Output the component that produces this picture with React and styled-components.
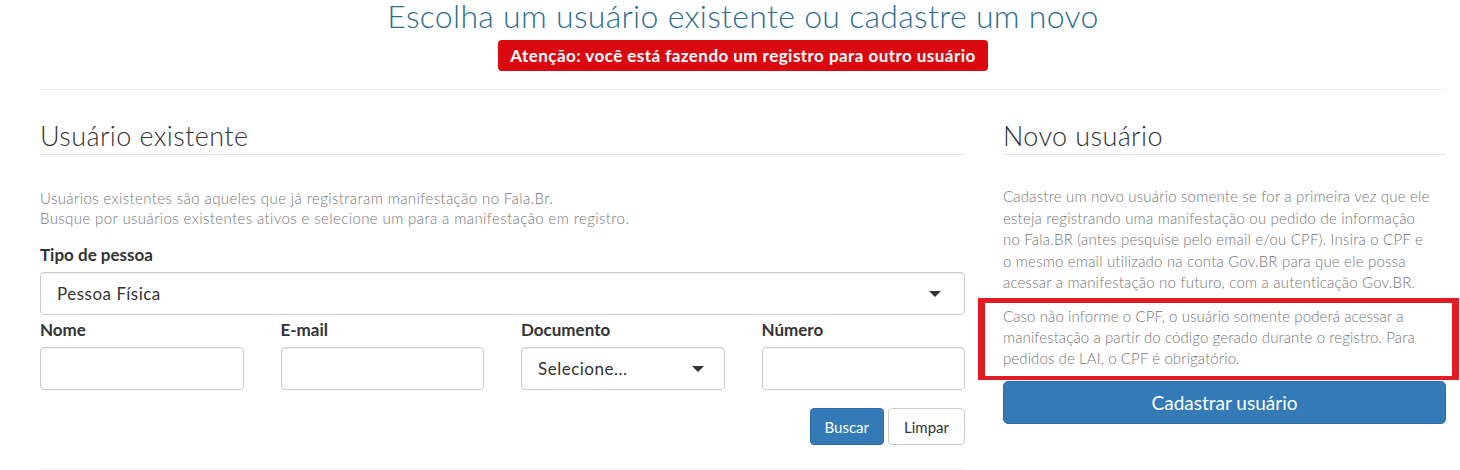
import React from 'react'
import styled, { createGlobalStyle } from 'styled-components'

const Global = createGlobalStyle`
  body {
    margin: 0;
    background: #fff;
    font-family: "Lato", "Open Sans", sans-serif;
    color: #333;
  }
  * { box-sizing: border-box; }
`

const Page = styled.div`
  width: 1460px;
  height: 470px;
  overflow: hidden;
  padding: 0 14px 0 40px;
`

const Header = styled.div`
  display: flex;
  flex-direction: column;
  align-items: center;
  padding-top: 1px;
  padding-bottom: 18px;
  border-bottom: 1px solid #eee;
`

const Title = styled.h1`
  margin: 0;
  font-size: 32px;
  line-height: 30px;
  font-weight: 300;
  color: #2d6f8f;
  letter-spacing: 0.3px;
`

const Warning = styled.div`
  margin-top: 9px;
  background: #d9090f;
  color: #fff;
  font-weight: 700;
  font-size: 17px;
  letter-spacing: 0.45px;
  line-height: 31px;
  padding: 0 12px;
  border-radius: 4px;
`

const Columns = styled.div`
  display: grid;
  grid-template-columns: 925px 443px;
  column-gap: 38px;
  padding-top: 30px;
`

const Column = styled.section`
  display: flex;
  flex-direction: column;
`

const SectionTitle = styled.h2`
  margin: 0;
  font-size: 27px;
  font-weight: 300;
  line-height: 32px;
  letter-spacing: 0.4px;
  color: #333;
  padding-bottom: 2px;
  border-bottom: 1px solid #e5e5e5;
`

const Text = styled.p`
  margin: ${p => p.$top || 0}px 0 0;
  font-size: 15px;
  line-height: ${p => p.$lh || 20}px;
  letter-spacing: ${p => p.$ls || 0}px;
  font-weight: 300;
  color: #777;
`

const Label = styled.label`
  display: block;
  font-weight: 700;
  font-size: 17px;
  line-height: 20px;
  color: #333;
  margin-bottom: 7px;
`

const Field = styled.div`
  display: flex;
  flex-direction: column;
  margin-top: ${p => p.$top || 0}px;
`

const Box = styled.div`
  height: 43px;
  border: 1px solid #ccc;
  border-radius: 4px;
  box-shadow: inset 0 1px 1px rgba(0, 0, 0, 0.075);
  display: flex;
  align-items: center;
  justify-content: space-between;
  padding: 0 16px;
  font-size: 17px;
  font-weight: 400;
  letter-spacing: 0.5px;
  color: #333;
  background: #fff;
`

const Caret = styled.span`
  width: 0;
  height: 0;
  border-left: 6px solid transparent;
  border-right: 6px solid transparent;
  border-top: 6px solid #333;
  margin-right: ${p => p.$mr || 4}px;
`

const Grid4 = styled.div`
  display: grid;
  grid-template-columns: repeat(4, 1fr);
  column-gap: 37px;
  margin-top: 5px;
`

const Actions = styled.div`
  display: flex;
  justify-content: flex-end;
  gap: 4px;
  margin-top: 18px;
  padding-bottom: 24px;
  border-bottom: 1px solid #eee;
`

const Button = styled.button`
  font-family: inherit;
  font-size: 15px;
  height: 37px;
  padding: 0 ${p => (p.$primary ? 14 : 15)}px;
  border-radius: 4px;
  border: 1px solid ${p => (p.$primary ? '#2e6da4' : '#ccc')};
  background: ${p => (p.$primary ? '#337ab7' : '#fff')};
  color: ${p => (p.$primary ? '#fff' : '#333')};
`

const Highlight = styled.div`
  margin: 4px -13px 0 -25px;
  border: solid #e31c23;
  border-width: 5px 7px 4px 7px;
  padding: 3px 6px 7px 18px;
`

const WideButton = styled.button`
  margin-top: 1px;
  height: 43px;
  width: 100%;
  border-radius: 5px;
  border: 1px solid #2e6da4;
  background: #337ab7;
  color: #fff;
  font-family: inherit;
  font-size: 19px;
`

export default function App() {
  return (
    <Page>
      <Global />
      <Header>
        <Title>Escolha um usuário existente ou cadastre um novo</Title>
        <Warning>Atenção: você está fazendo um registro para outro usuário</Warning>
      </Header>
      <Columns>
        <Column>
          <SectionTitle>Usuário existente</SectionTitle>
          <Text $top={33} $ls={0.4}>
            Usuários existentes são aqueles que já registraram manifestação no Fala.Br.
            <br />
            Busque por usuários existentes ativos e selecione um para a manifestação em registro.
          </Text>
          <Field $top={17}>
            <Label>Tipo de pessoa</Label>
            <Box>
              Pessoa Física
              <Caret $mr={7} />
            </Box>
          </Field>
          <Grid4>
            <Field>
              <Label>Nome</Label>
              <Box />
            </Field>
            <Field>
              <Label>E-mail</Label>
              <Box />
            </Field>
            <Field>
              <Label>Documento</Label>
              <Box>
                Selecione...
                <Caret $mr={4} />
              </Box>
            </Field>
            <Field>
              <Label>Número</Label>
              <Box />
            </Field>
          </Grid4>
          <Actions>
            <Button $primary>Buscar</Button>
            <Button>Limpar</Button>
          </Actions>
        </Column>
        <Column>
          <SectionTitle>Novo usuário</SectionTitle>
          <Text $top={31} $lh={21.5} $ls={0.2}>
            Cadastre um novo usuário somente se for a primeira vez que ele
            <br />
            esteja registrando uma manifestação ou pedido de informação
            <br />
            no Fala.BR (antes pesquise pelo email e/ou CPF). Insira o CPF e
            <br />
            o mesmo email utilizado na conta Gov.BR para que ele possa
            <br />
            acessar a manifestação no futuro, com a autenticação Gov.BR.
          </Text>
          <Highlight>
            <Text $lh={21} $ls={0.1}>
              Caso não informe o CPF, o usuário somente poderá acessar a
              <br />
              manifestação a partir do código gerado durante o registro. Para
              <br />
              pedidos de LAI, o CPF é obrigatório.
            </Text>
          </Highlight>
          <WideButton>Cadastrar usuário</WideButton>
        </Column>
      </Columns>
    </Page>
  )
}
